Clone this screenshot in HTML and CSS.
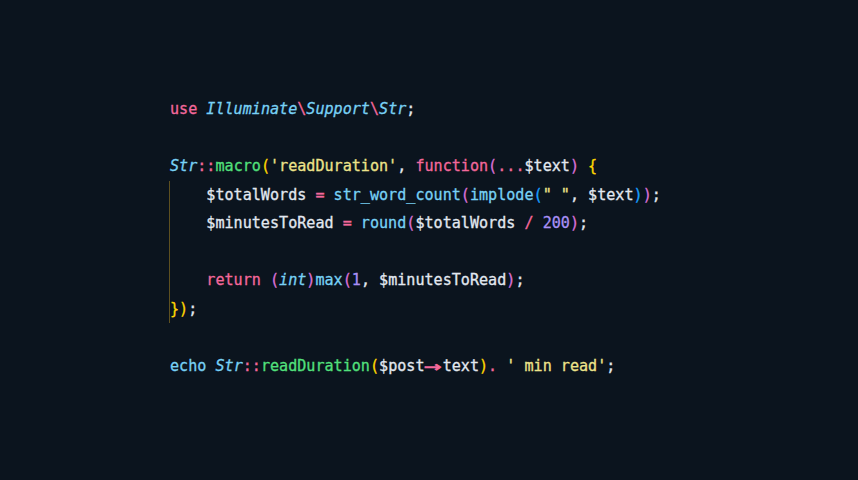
FILE: index.html
```html
<!DOCTYPE html>
<html>
<head>
<meta charset="utf-8">
<link rel="stylesheet" href="styles.css">
</head>
<body>
<div class="code">
  <div class="line"><span class="kw">use</span> <span class="cls">Illuminate</span><span class="kw">\</span><span class="cls">Support</span><span class="kw">\</span><span class="cls">Str</span><span class="pl">;</span></div>
  <div class="line"></div>
  <div class="line"><span class="cls">Str</span><span class="kw">::</span><span class="fn">macro</span><span class="b1">(</span><span class="str">'readDuration'</span><span class="pl">, </span><span class="kw">function</span><span class="b2">(</span><span class="kw">...</span><span class="var">$text</span><span class="b2">)</span> <span class="b1">{</span></div>
  <div class="block">
    <div class="line"><span class="var">    $totalWords </span><span class="kw">=</span> <span class="call">str_word_count</span><span class="b2">(</span><span class="call">implode</span><span class="b3">(</span><span class="str">" "</span><span class="pl">, </span><span class="var">$text</span><span class="b3">)</span><span class="b2">)</span><span class="pl">;</span></div>
    <div class="line"><span class="var">    $minutesToRead </span><span class="kw">=</span> <span class="call">round</span><span class="b2">(</span><span class="var">$totalWords </span><span class="kw">/</span> <span class="num">200</span><span class="b2">)</span><span class="pl">;</span></div>
    <div class="line"></div>
    <div class="line">    <span class="kw">return</span> <span class="b2">(</span><span class="cls">int</span><span class="b2">)</span><span class="call">max</span><span class="b2">(</span><span class="num">1</span><span class="pl">, </span><span class="var">$minutesToRead</span><span class="b2">)</span><span class="pl">;</span></div>
    <div class="line"><span class="b1">})</span><span class="pl">;</span></div>
  </div>
  <div class="line"></div>
  <div class="line"><span class="call">echo</span> <span class="cls">Str</span><span class="kw">::</span><span class="fn">readDuration</span><span class="b1">(</span><span class="var">$post</span><span class="arrow kw">→</span><span class="var">text</span><span class="b1">)</span><span class="kw">.</span> <span class="str">' min read'</span><span class="pl">;</span></div>
</div>
</body>
</html>
```
FILE: styles.css
```css
html, body {
  margin: 0;
  padding: 0;
  background: #0b141e;
  width: 858px;
  height: 480px;
  overflow: hidden;
}
.code {
  padding: 95px 0 0 170px;
  font-family: "DejaVu Sans Mono", monospace;
  font-size: 15.1px;
  color: #e2e8f0;
  -webkit-text-stroke: 0.3px currentColor;
}
.line {
  height: 28.56px;
  line-height: 28.56px;
  white-space: pre;
}
.block {
  margin-left: -1px;
  border-left: 1px solid #5e5020;
}
.kw { color: #f3689b; }
.cls { color: #78d1f5; font-style: italic; }
.call { color: #78d1f5; }
.fn { color: #52e07c; }
.str { color: #ede38a; }
.num { color: #a990f5; }
.var { color: #e2e8f0; }
.pl { color: #e2e8f0; }
.b1 { color: #ffd700; }
.b2 { color: #da70d6; }
.b3 { color: #179fff; }
.arrow {
  display: inline-block;
  width: 2ch;
  text-align: center;
  transform: scaleX(1.9) scaleY(1.2);
  -webkit-text-stroke: 0.6px currentColor;
}
```
